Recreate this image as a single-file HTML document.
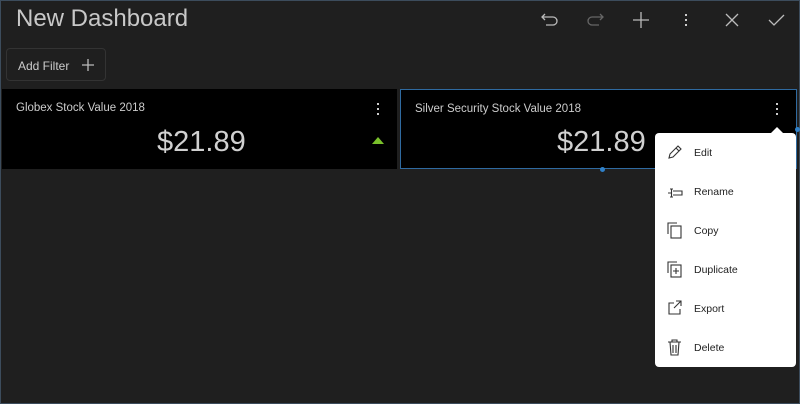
<!DOCTYPE html>
<html><head><style>
*{margin:0;padding:0;box-sizing:border-box}
body{width:800px;height:404px;background:#1f1f1f;font-family:"Liberation Sans",sans-serif;position:relative;overflow:hidden;box-shadow:inset 0 0 0 1px #3c4c5c}
.t{position:absolute;left:16px;top:5px;font-size:24px;color:#c8c8c8}
.ic{position:absolute;top:9px}
.af{position:absolute;left:6px;top:48px;width:100px;height:33px;border:1px solid #333;border-radius:4px;color:#ccc;font-size:12px;padding:10px 0 0 11px}
.card{position:absolute;top:89px;height:80px;background:#000}
.ct{position:absolute;left:14px;top:13px;font-size:11.5px;color:#ccc}
.v{position:absolute;top:37px;font-size:29px;color:#d0d0d0}
.dots{position:absolute;top:14px;width:2px;height:12px}
.dots i{display:block;width:2px;height:2px;background:#ccc;margin-bottom:3px}
.menu{position:absolute;left:655px;top:133px;width:141px;height:234px;background:#fff;border-radius:4px}
.menu:before{content:"";position:absolute;left:115px;top:-6px;border:7px solid transparent;border-top:0;border-bottom:7px solid #fff}
.it{position:absolute;left:39px;font-size:10.5px;color:#222}
.mi{position:absolute;left:12px}
.h{position:absolute;width:5px;height:5px;border-radius:50%;background:#2f80c8}
</style></head><body>
<div class="t">New Dashboard</div>
<svg class="ic" style="left:539px" width="22" height="22" viewBox="0 0 22 22" fill="none" stroke="#bbb" stroke-width="1.3"><path d="M6 5L3 8l3 3M3 8h11a4 4 0 010 8H7"/></svg>
<svg class="ic" style="left:584px" width="22" height="22" viewBox="0 0 22 22" fill="none" stroke="#666" stroke-width="1.3"><path d="M16 5l3 3-3 3M19 8H8a4 4 0 000 8h7"/></svg>
<svg class="ic" style="left:630px" width="22" height="22" viewBox="0 0 22 22" stroke="#bbb" stroke-width="1.3"><path d="M11 3v16M3 11h16"/></svg>
<div class="dots" style="left:685px;top:14px"><i></i><i></i><i></i></div>
<svg class="ic" style="left:721px" width="22" height="22" viewBox="0 0 22 22" stroke="#bbb" stroke-width="1.3"><path d="M5 5l12 12M17 5L5 17"/></svg>
<svg class="ic" style="left:765px" width="22" height="22" viewBox="0 0 22 22" fill="none" stroke="#bbb" stroke-width="1.3"><path d="M4 11l5 5L19 6"/></svg>
<div class="af">Add Filter<svg style="position:absolute;left:74px;top:9px" width="14" height="14" stroke="#bbb" stroke-width="1.3"><path d="M7 1v12M1 7h12"/></svg></div>
<div class="card" style="left:2px;width:395px"><div class="ct">Globex Stock Value 2018</div><div class="v" style="left:155px">$21.89</div><div class="dots" style="left:375px"><i></i><i></i><i></i></div>
<svg style="position:absolute;left:370px;top:48px" width="12" height="8"><path d="M0 7L6 0l6 7z" fill="#7ac12b"/></svg></div>
<div class="card" style="left:400px;width:397px;border:1px solid #2f6aa0"><div class="ct">Silver Security Stock Value 2018</div><div class="v" style="left:156px;top:36px">$21.89</div><div class="dots" style="left:375px;top:13px"><i></i><i></i><i></i></div></div>
<div class="h" style="left:600px;top:167px"></div><div class="h" style="left:795px;top:127px"></div>
<div class="menu">
<svg class="mi" style="top:11px" width="16" height="16" fill="none" stroke="#333" stroke-width="1.1"><path d="M2 14l1-4 8-8 3 3-8 8zM9 4l3 3"/></svg><div class="it" style="top:14px">Edit</div>
<svg class="mi" style="top:51px" width="16" height="16" fill="none" stroke="#333" stroke-width="1.1"><path d="M3 5h3M3 13h3M4.5 5v8M6 7h9v4H6M1 9h3"/></svg><div class="it" style="top:53px">Rename</div>
<svg class="mi" style="top:89px" width="16" height="17" fill="none" stroke="#333" stroke-width="1.1"><path d="M1 12V1h9"/><rect x="4" y="4" width="10" height="12"/></svg><div class="it" style="top:92px">Copy</div>
<svg class="mi" style="top:128px" width="16" height="17" fill="none" stroke="#333" stroke-width="1.1"><path d="M1 12V1h9"/><rect x="4" y="4" width="10" height="12"/><path d="M9 7v6M6 10h6"/></svg><div class="it" style="top:131px">Duplicate</div>
<svg class="mi" style="top:167px" width="16" height="16" fill="none" stroke="#333" stroke-width="1.1"><path d="M7 3H2v11h11V9M9 1h5v5M14 1L7 8"/></svg><div class="it" style="top:170px">Export</div>
<svg class="mi" style="top:206px" width="16" height="17" fill="none" stroke="#333" stroke-width="1.1"><path d="M1 3h13M5 3V1h5v2M3 3l1 13h7l1-13M6 6v8M9 6v8"/></svg><div class="it" style="top:209px">Delete</div>
</div>
</body></html>
